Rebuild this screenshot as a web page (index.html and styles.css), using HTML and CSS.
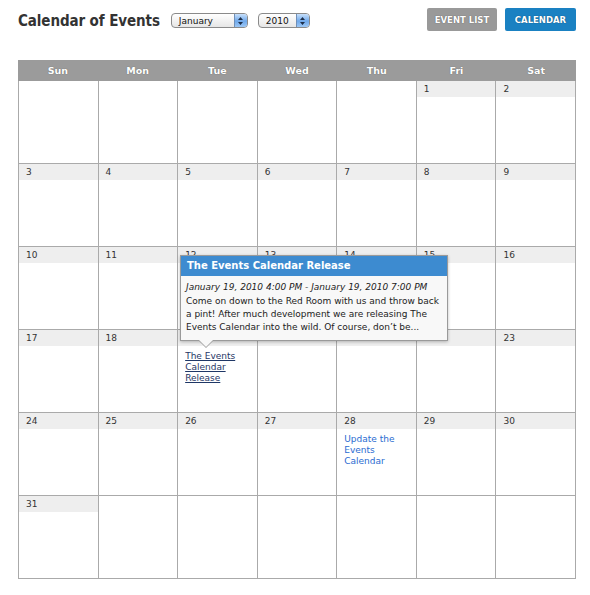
FILE: index.html
```html
<!DOCTYPE html>
<html>
<head>
<meta charset="utf-8">
<title>Calendar of Events</title>
<link rel="stylesheet" href="styles.css">
</head>
<body>
<div class="page">
  <header class="top">
    <h1 class="title">Calendar of Events</h1>
    <div class="select select-month"><span>January</span><i class="stepper"><svg width="5" height="8" viewBox="0 0 5 8"><path d="M2.5 0 L5 3 H0 Z M2.5 8 L0 5 H5 Z" fill="#1d2f4a"/></svg></i></div>
    <div class="select select-year"><span>2010</span><i class="stepper"><svg width="5" height="8" viewBox="0 0 5 8"><path d="M2.5 0 L5 3 H0 Z M2.5 8 L0 5 H5 Z" fill="#1d2f4a"/></svg></i></div>
    <nav class="views">
      <a class="btn btn-list">EVENT LIST</a>
      <a class="btn btn-cal">CALENDAR</a>
    </nav>
  </header>

  <div class="cal">
    <div class="cal-head">
      <div>Sun</div><div>Mon</div><div>Tue</div><div>Wed</div><div>Thu</div><div>Fri</div><div>Sat</div>
    </div>
    <div class="cal-grid">
      <div class="cell"></div><div class="cell"></div><div class="cell"></div><div class="cell"></div><div class="cell thu"></div>
      <div class="cell"><div class="day">1</div></div><div class="cell"><div class="day">2</div></div>

      <div class="cell"><div class="day">3</div></div><div class="cell"><div class="day">4</div></div><div class="cell"><div class="day">5</div></div><div class="cell"><div class="day">6</div></div><div class="cell thu"><div class="day">7</div></div><div class="cell"><div class="day">8</div></div><div class="cell"><div class="day">9</div></div>

      <div class="cell"><div class="day">10</div></div><div class="cell"><div class="day">11</div></div><div class="cell"><div class="day">12</div></div><div class="cell"><div class="day">13</div></div><div class="cell thu"><div class="day">14</div></div><div class="cell"><div class="day">15</div></div><div class="cell"><div class="day">16</div></div>

      <div class="cell"><div class="day">17</div></div><div class="cell"><div class="day">18</div></div>
      <div class="cell"><div class="day">19</div><a class="event event-visited">The Events Calendar Release</a></div>
      <div class="cell"><div class="day">20</div></div><div class="cell thu"><div class="day">21</div></div><div class="cell"><div class="day">22</div></div><div class="cell"><div class="day">23</div></div>

      <div class="cell"><div class="day">24</div></div><div class="cell"><div class="day">25</div></div><div class="cell"><div class="day">26</div></div><div class="cell"><div class="day">27</div></div>
      <div class="cell thu"><div class="day">28</div><a class="event">Update the Events Calendar</a></div>
      <div class="cell"><div class="day">29</div></div><div class="cell"><div class="day">30</div></div>

      <div class="cell"><div class="day">31</div></div><div class="cell"></div><div class="cell"></div><div class="cell"></div><div class="cell thu"></div><div class="cell"></div><div class="cell"></div>
    </div>

    <div class="tooltip">
      <h4 class="tip-title">The Events Calendar Release</h4>
      <div class="tip-body">
        <p class="tip-date">January 19, 2010 4:00 PM - January 19, 2010 7:00 PM</p>
        <p class="tip-text">Come on down to the Red Room with us and throw back a pint! After much development we are releasing The Events Calendar into the wild. Of course, don’t be...</p>
      </div>
    </div>
  </div>
</div>
</body>
</html>
```

FILE: styles.css
```css
* { box-sizing: border-box; }
html, body { margin: 0; padding: 0; background: #fff; }
body {
  font-family: "DejaVu Sans", Verdana, sans-serif;
  color: #333;
}
.page { padding: 8px 14px 0 18px; }

.top {
  display: flex;
  align-items: center;
  height: 23px;
}
.title {
  margin: 2px 11px 0 0;
  font-family: "DejaVu Sans Condensed", "DejaVu Sans", sans-serif;
  font-size: 15px;
  font-weight: bold;
  color: #333;
  letter-spacing: -0.1px;
}
.select {
  position: relative;
  display: flex;
  align-items: center;
  height: 15px;
  margin-top: 2px;
  border: 1px solid #8a8a8a;
  border-radius: 4px;
  background: linear-gradient(#ffffff, #e6e6e6);
  font-size: 9px;
  color: #111;
  padding-left: 7px;
  overflow: hidden;
}
.select-month { width: 77px; }
.select-year { width: 52px; margin-left: 10px; }
.stepper {
  position: absolute;
  right: 0; top: 0; bottom: 0;
  width: 13px;
  border-left: 1px solid #6f8fb8;
  background: linear-gradient(#c8e0fb, #6fa8ea 55%, #9cc7f5);
  display: flex;
  align-items: center;
  justify-content: center;
}
.views {
  margin-left: auto;
  display: flex;
  gap: 8px;
}
.btn {
  display: flex;
  align-items: center;
  justify-content: center;
  height: 23px;
  border-radius: 2px;
  color: #fff;
  font-size: 8.5px;
  font-weight: bold;
  text-shadow: 0 0 1px rgba(0,0,0,.5);
}
.btn-list { width: 70px; background: #999; }
.btn-cal { width: 71px; background: #1a81c2; }

.cal {
  position: relative;
  margin-top: 29px;
  width: 558px;
}
.cal-head {
  display: grid;
  grid-template-columns: repeat(7, 1fr);
  height: 21px;
  background: #9b9b9b;
}
.cal-head div {
  display: flex;
  align-items: center;
  justify-content: center;
  color: #fff;
  font-size: 9.5px;
  font-weight: bold;
  text-shadow: 0 0 1px rgba(0,0,0,.45);
}
.cal-grid {
  display: grid;
  grid-template-columns: repeat(7, 1fr);
  grid-auto-rows: 83px;
  border-left: 1px solid #aaa;
}
.cell {
  border-right: 1px solid #aaa;
  border-bottom: 1px solid #aaa;
  background: #fff;
}
.day {
  height: 16px;
  background: #eee;
  font-size: 9px;
  line-height: 16px;
  padding-left: 7px;
  color: #333;
}
.event {
  display: block;
  padding: 5px 7px 0 7px;
  font-size: 9px;
  line-height: 11px;
  color: #2a6bd1;
}
.event-visited {
  color: #1f3766;
  text-decoration: underline;
}

.tooltip {
  position: absolute;
  left: 162px;
  top: 195px;
  width: 268px;
  border: 1px solid #9a9a9a;
  background: #f8f8f8;
  box-shadow: 0 1px 3px rgba(0,0,0,.25);
}
.tooltip::before,
.tooltip::after {
  content: "";
  position: absolute;
  left: 17px;
  border-style: solid;
  border-color: transparent;
}
.tooltip::before {
  bottom: -8px;
  border-width: 8px 8px 0 8px;
  border-top-color: #9a9a9a;
}
.tooltip::after {
  bottom: -7px;
  left: 18px;
  border-width: 7px 7px 0 7px;
  border-top-color: #f8f8f8;
}
.tip-title {
  margin: 0;
  height: 20px;
  line-height: 20px;
  padding-left: 6px;
  background: #3d8bd0;
  color: #fff;
  font-size: 10px;
  font-weight: bold;
}
.tip-body {
  padding: 5px 6px 6px 5px;
  font-size: 9px;
  line-height: 13px;
  color: #222;
}
.tip-body p { margin: 0; }
.tip-date { font-style: italic; margin-bottom: 1px !important; }
```
